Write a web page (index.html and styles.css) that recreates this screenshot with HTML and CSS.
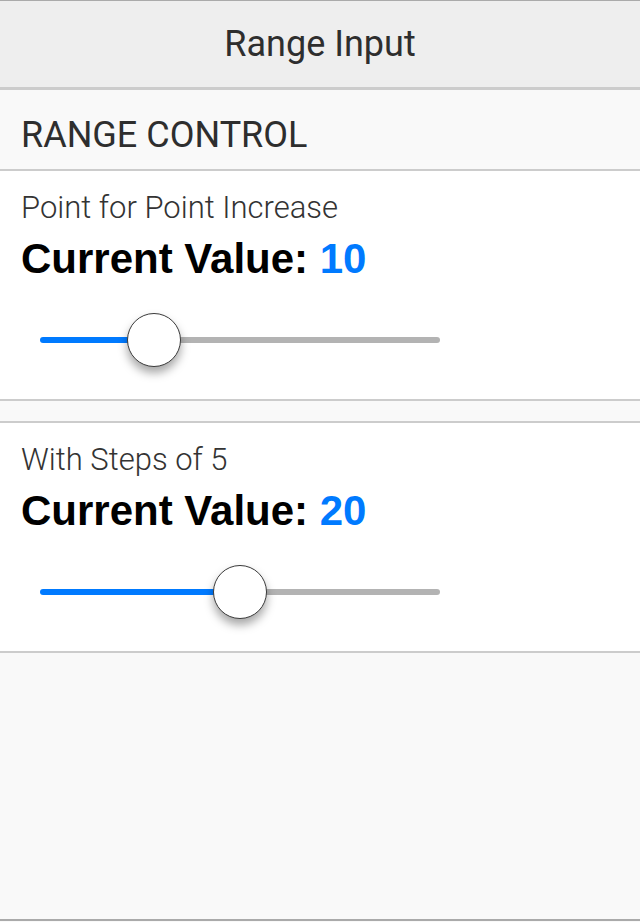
FILE: index.html
```html
<!DOCTYPE html>
<html>
<head>
<meta charset="utf-8">
<title>Range Input</title>
<link rel="stylesheet" href="styles.css">
</head>
<body>
<div class="app">
  <header class="navbar"><h1 class="title">Range Input</h1></header>
  <div class="section-header">RANGE CONTROL</div>
  <div class="card">
    <div class="label">Point for Point Increase</div>
    <div class="current">Current Value: <span class="value">10</span></div>
    <div class="slider-row">
      <input class="range" type="range" min="0" max="40" step="1" value="10" style="--pct: 28.4%">
    </div>
  </div>
  <div class="spacer"></div>
  <div class="card card-bordered">
    <div class="label">With Steps of 5</div>
    <div class="current">Current Value: <span class="value">20</span></div>
    <div class="slider-row">
      <input class="range" type="range" min="0" max="40" step="5" value="20" style="--pct: 50%">
    </div>
  </div>
  <div class="rest"></div>
</div>
</body>
</html>
```

FILE: styles.css
```css
html, body {
  margin: 0;
  padding: 0;
}
body {
  background: #f9f9f9;
  font-family: Roboto, "Liberation Sans", sans-serif;
  color: #333;
}
.app {
  display: flex;
  flex-direction: column;
  height: 922px;
}
.navbar {
  height: 86px;
  flex: none;
  border-top: 1px solid #aaa;
  border-bottom: 3px solid #ccc;
  background: #eeeeee;
  display: flex;
  align-items: center;
  justify-content: center;
}
.title {
  margin: 0;
  font-size: 36px;
  font-weight: 400;
  color: #2e2e2e;
}
.section-header {
  flex: none;
  box-sizing: border-box;
  padding: 10px 0 0 21px;
  border-bottom: 2px solid #ccc;
  height: 81px;
  display: flex;
  align-items: center;
  font-size: 36px;
  font-weight: 400;
  color: #2e2e2e;
}
.card {
  flex: none;
  background: #fff;
  height: 230px;
  box-sizing: border-box;
  border-bottom: 2px solid #ccc;
  padding: 19px 21px 0;
}
.card-bordered {
  height: 232px;
  border-top: 2px solid #ccc;
}
.spacer {
  flex: none;
  height: 20px;
  background: #f9f9f9;
}
.label {
  font-size: 31px;
  font-weight: 300;
  line-height: 36px;
  color: #333;
}
.current {
  margin-top: 9px;
  font-family: "Liberation Sans", Arial, sans-serif;
  font-weight: 700;
  font-size: 42px;
  line-height: 48px;
  color: #000;
}
.value {
  color: #007aff;
}
.slider-row {
  margin-top: 27px;
  padding-left: 19px;
  height: 60px;
  display: flex;
  align-items: center;
}
.range {
  -webkit-appearance: none;
  appearance: none;
  margin: 0;
  width: 400px;
  height: 58px;
  background: transparent;
}
.range::-webkit-slider-runnable-track {
  height: 6px;
  border-radius: 3px;
  background: linear-gradient(to right, #007aff 0, #007aff var(--pct), #b3b3b3 var(--pct), #b3b3b3 100%);
}
.range::-webkit-slider-thumb {
  -webkit-appearance: none;
  appearance: none;
  width: 54px;
  height: 54px;
  margin-top: -24px;
  border-radius: 50%;
  box-sizing: border-box;
  background: #fff;
  border: 1.5px solid #3a3a3a;
  box-shadow: 0 6px 10px rgba(0, 0, 0, 0.35);
}
.rest {
  flex: 1;
  border-bottom: 2px solid #aaa;
  margin-bottom: 1px;
}
```
